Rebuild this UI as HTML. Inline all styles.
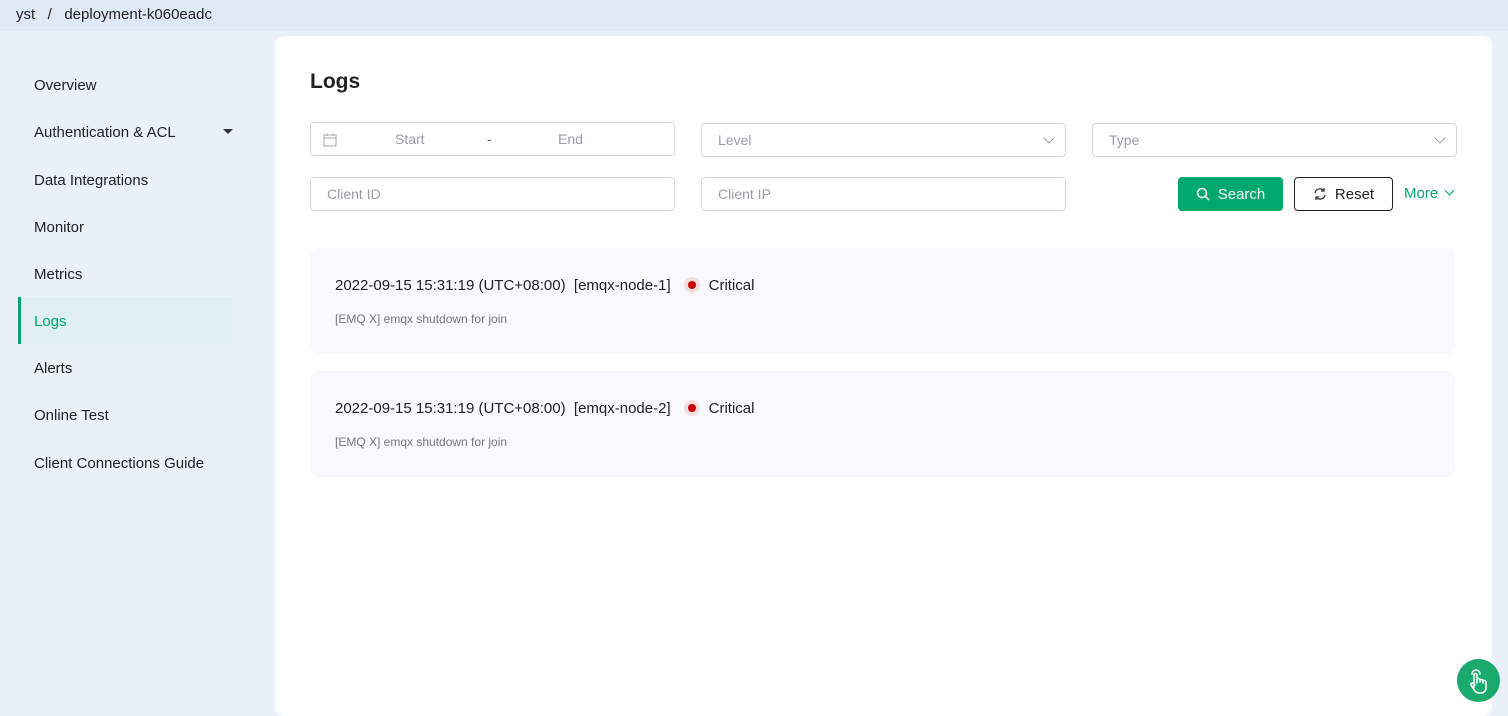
<!DOCTYPE html>
<html><head><meta charset="utf-8"><style>
*{box-sizing:border-box;margin:0;padding:0}
body{width:1508px;height:704px;overflow:hidden;background:#eaf1fb;font-family:"Liberation Sans",sans-serif;color:#1a1a1a;position:relative}
.top{position:absolute;left:0;top:0;width:1508px;height:31px;background:#e0e9f7;font-size:15px;line-height:30px;padding-left:16px;color:#222}
.side a{position:absolute;left:34px;font-size:15px;color:#222;text-decoration:none}
.active{position:absolute;left:18px;top:297px;width:214px;height:47px;background:#dfeff3;border-left:3px solid #00a86b}
.card{position:absolute;left:275px;top:36px;width:1217px;height:680px;background:#fff;border-radius:10px}
h1{position:absolute;left:310px;top:70px;font-size:21px;font-weight:bold;color:#222}
.inp{position:absolute;height:34px;border:1px solid #d6d9de;border-radius:4px;font-size:14px;color:#9a9ea5;line-height:32px;padding-left:16px;background:#fff}
.chev{position:absolute;right:12px;top:10px;width:8px;height:8px;border-right:1.2px solid #999;border-bottom:1.2px solid #999;transform:rotate(45deg)}
.btn{position:absolute;top:177px;height:34px;border-radius:4px;font-size:15px;line-height:34px;text-align:center}
.log{position:absolute;left:310px;width:1145px;height:106px;background:#f7f9fd;border-radius:8px}
.log .t{position:absolute;left:25px;top:29px;font-size:15px;color:#222;white-space:pre}
.log .m{position:absolute;left:25px;top:64px;font-size:12px;color:#777}
.dot{display:inline-block;width:16px;height:16px;border-radius:50%;background:#f6dede;vertical-align:-3px;position:relative;margin:0 9px 0 13px}
.dot:after{content:"";position:absolute;left:4px;top:4px;width:8px;height:8px;border-radius:50%;background:#c00}
</style></head><body>
<div class="top">yst &nbsp;&nbsp;/&nbsp;&nbsp; deployment-k060eadc</div>
<div class="active"></div>
<div class="side">
<a style="top:77px">Overview</a>
<a style="top:124px">Authentication &amp; ACL</a>
<div style="position:absolute;left:223px;top:129px;border-left:5px solid transparent;border-right:5px solid transparent;border-top:5px solid #333"></div>
<a style="top:172px">Data Integrations</a>
<a style="top:219px">Monitor</a>
<a style="top:266px">Metrics</a>
<a style="top:313px;color:#00a86b">Logs</a>
<a style="top:360px">Alerts</a>
<a style="top:407px">Online Test</a>
<a style="top:455px">Client Connections Guide</a>
</div>
<div class="card"></div>
<h1>Logs</h1>
<div class="inp" style="left:310px;top:122px;width:365px">
<svg style="position:absolute;left:12px;top:10px" width="14" height="14" viewBox="0 0 14 14" fill="none" stroke="#aaa"><rect x="1" y="2" width="12" height="11"/><line x1="1" y1="5" x2="13" y2="5"/><line x1="4" y1="0.5" x2="4" y2="3"/><line x1="10" y1="0.5" x2="10" y2="3"/></svg>
<span style="position:absolute;left:84px">Start</span><span style="position:absolute;left:176px;color:#555">-</span><span style="position:absolute;left:247px">End</span></div>
<div class="inp" style="left:701px;top:123px;width:365px">Level<div class="chev"></div></div>
<div class="inp" style="left:1092px;top:123px;width:365px">Type<div class="chev"></div></div>
<div class="inp" style="left:310px;top:177px;width:365px">Client ID</div>
<div class="inp" style="left:701px;top:177px;width:365px">Client IP</div>
<div class="btn" style="left:1178px;width:105px;background:#00a86b;color:#fff;line-height:35px">
<svg style="vertical-align:-2px;margin-right:8px" width="14" height="14" viewBox="0 0 14 14" fill="none" stroke="#fff" stroke-width="1.5"><circle cx="6" cy="6" r="4.5"/><line x1="9.3" y1="9.3" x2="13" y2="13"/></svg>Search</div>
<div class="btn" style="left:1294px;width:99px;border:1px solid #222;color:#222;line-height:33px">
<svg style="vertical-align:-2px;margin-right:8px" width="14" height="14" viewBox="0 0 14 14" fill="none" stroke="#333" stroke-width="1.3"><path d="M2 6a5 5 0 0 1 9-2M12 8a5 5 0 0 1-9 2"/><path d="M11 1v3H8M3 13v-3h3"/></svg>Reset</div>
<div style="position:absolute;left:1404px;top:185px;font-size:15px;color:#00a86b">More <span style="display:inline-block;width:7px;height:7px;border-right:1.2px solid #00a86b;border-bottom:1.2px solid #00a86b;transform:rotate(45deg);vertical-align:4px;margin-left:4px"></span></div>
<div class="log" style="top:248px"><div class="t">2022-09-15 15:31:19 (UTC+08:00)  [emqx-node-1]<span class="dot"></span>Critical</div><div class="m">[EMQ X] emqx shutdown for join</div></div>
<div class="log" style="top:371px"><div class="t">2022-09-15 15:31:19 (UTC+08:00)  [emqx-node-2]<span class="dot"></span>Critical</div><div class="m">[EMQ X] emqx shutdown for join</div></div>
<div style="position:absolute;left:1457px;top:659px;width:43px;height:43px;border-radius:50%;background:#1aaa6e">
<svg style="position:absolute;left:10px;top:8px" width="24" height="28" viewBox="0 0 24 28" fill="none" stroke="#fff" stroke-width="1.6" stroke-linecap="round" stroke-linejoin="round"><path d="M5 7a4 4 0 0 1 8 0"/><path d="M7 20V8a1.5 1.5 0 0 1 3 0v8M10 13a1.5 1.5 0 0 1 3 0v2M13 14a1.5 1.5 0 0 1 3 0v2M16 15a1.5 1.5 0 0 1 3 0v5c0 4-2 6-5 6h-2c-3 0-4-2-6-5l-2-3a1.5 1.5 0 0 1 3-1l1 1"/></svg></div>
</body></html>
